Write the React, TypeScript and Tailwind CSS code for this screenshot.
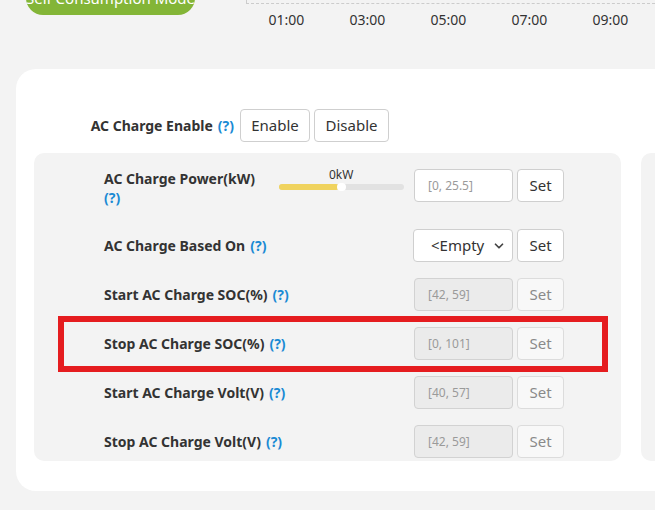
import { ChevronDown } from "lucide-react";

const font = { fontFamily: '"Noto Sans", "Open Sans", sans-serif' };

function Help() {
  return <span className="text-[#1a8ad4] font-bold ml-[5px]">(?)</span>;
}

function RangeInput({ value, disabled }: { value: string; disabled?: boolean }) {
  return (
    <div
      className={`shrink-0 w-[99px] h-[33px] rounded-[4px] border flex items-center pl-[13px] text-[12px] text-[#9a9a9a] ${
        disabled ? "bg-[#ebebeb] border-[#d2d2d2]" : "bg-white border-[#cfcfcf]"
      }`}
    >
      {value}
    </div>
  );
}

function SetButton({ disabled }: { disabled?: boolean }) {
  return (
    <button
      className={`shrink-0 ml-[4px] w-[47px] h-[33px] rounded-[4px] border text-[15px] ${
        disabled
          ? "bg-[#f8f8f8] border-[#dcdcdc] text-[#8a8a8a]"
          : "bg-white border-[#cfcfcf] text-[#333]"
      }`}
    >
      Set
    </button>
  );
}

const rows = [
  { label: "Start AC Charge SOC(%)", value: "[42, 59]" },
  { label: "Stop AC Charge SOC(%)", value: "[0, 101]", marked: true },
  { label: "Start AC Charge Volt(V)", value: "[40, 57]" },
  { label: "Stop AC Charge Volt(V)", value: "[42, 59]" },
];

const times = ["01:00", "03:00", "05:00", "07:00", "09:00"];

export default function App() {
  return (
    <div className="w-[655px] h-[510px] bg-[#f3f3f3] overflow-hidden" style={font}>
      {/* top strip: mode pill + chart axis */}
      <div className="flex h-[69px]">
        <div className="shrink-0 ml-[26px] mt-[-19px] w-[169px] h-[34px] rounded-full bg-[#83b537] text-white text-[15px] whitespace-nowrap flex items-center justify-center">
          Self Consumption Mode
        </div>
        <div className="ml-[51px] flex-1">
          <div className="h-[4px] border-l border-b border-dashed border-[#cccccc]" />
          <div className="flex mt-[5px]">
            {times.map((t) => (
              <div key={t} className="shrink-0 w-[81px] text-center text-[14px] text-[#333]">
                {t}
              </div>
            ))}
          </div>
        </div>
      </div>

      {/* settings card */}
      <div className="ml-[16px] w-[680px] h-[422px] bg-white rounded-[20px] pt-[40px]">
        <div className="flex items-center">
          <div className="w-[218px] flex justify-end text-[14px] font-bold text-[#333]">
            AC Charge Enable
            <Help />
          </div>
          <button className="ml-[6px] w-[70px] h-[33px] rounded-[4px] border border-[#cfcfcf] bg-white text-[15px] text-[#333]">
            Enable
          </button>
          <button className="ml-[4px] w-[75px] h-[33px] rounded-[4px] border border-[#cfcfcf] bg-white text-[15px] text-[#333]">
            Disable
          </button>
        </div>

        <div className="flex gap-[20px] mt-[11px] ml-[18px]">
          <div className="shrink-0 w-[587px] h-[308px] bg-[#f3f3f3] rounded-[10px] pt-[16px]">
            {/* power row */}
            <div className="flex items-start pl-[70px]">
              <div className="shrink-0 w-[165px] text-[14px] font-bold text-[#333] leading-[19px]">
                AC Charge Power(kW)
                <br />
                <span className="text-[#1a8ad4]">(?)</span>
              </div>
              <div className="shrink-0 w-[145px] pl-[10px] pr-[10px]">
                <div className="relative h-[33px]">
                  <div className="absolute left-[50px] top-[-3px] text-[12px] text-[#333]">0kW</div>
                  <div className="absolute left-0 right-0 top-[15px] h-[6px] rounded-full bg-[#e2e2e2]">
                    <div className="h-full w-[60px] rounded-full bg-[#f0d35e]" />
                    <div className="absolute left-[58px] top-[-1px] w-[9px] h-[8px] rounded-full bg-white" />
                  </div>
                </div>
              </div>
              <RangeInput value="[0, 25.5]" />
              <SetButton />
            </div>

            {/* based on row */}
            <div className="flex items-center pl-[70px] mt-[22px] h-[33px]">
              <div className="shrink-0 w-[309px] text-[14px] font-bold text-[#333]">
                AC Charge Based On
                <Help />
              </div>
              <div className="shrink-0 w-[100px] h-[33px] rounded-[4px] border border-[#cfcfcf] bg-white flex items-center pl-[17px] pr-[6px] text-[15px] text-[#333]">
                <span className="flex-1">&lt;Empty</span>
                <ChevronDown size={14} strokeWidth={3} className="text-[#444]" />
              </div>
              <SetButton />
            </div>

            {rows.map((r) => (
              <div key={r.label} className="relative flex items-center pl-[70px] mt-[16px] h-[33px]">
                <div className="shrink-0 w-[310px] text-[14px] font-bold text-[#333]">
                  {r.label}
                  <Help />
                </div>
                <RangeInput value={r.value} disabled />
                <SetButton disabled />
                {r.marked && (
                  <div className="absolute left-[24px] top-[-11px] w-[550px] h-[56px] border-[6px] border-[#e51c1f]" />
                )}
              </div>
            ))}
          </div>
          <div className="shrink-0 w-[200px] h-[308px] bg-[#f3f3f3] rounded-[10px]" />
        </div>
      </div>
    </div>
  );
}
